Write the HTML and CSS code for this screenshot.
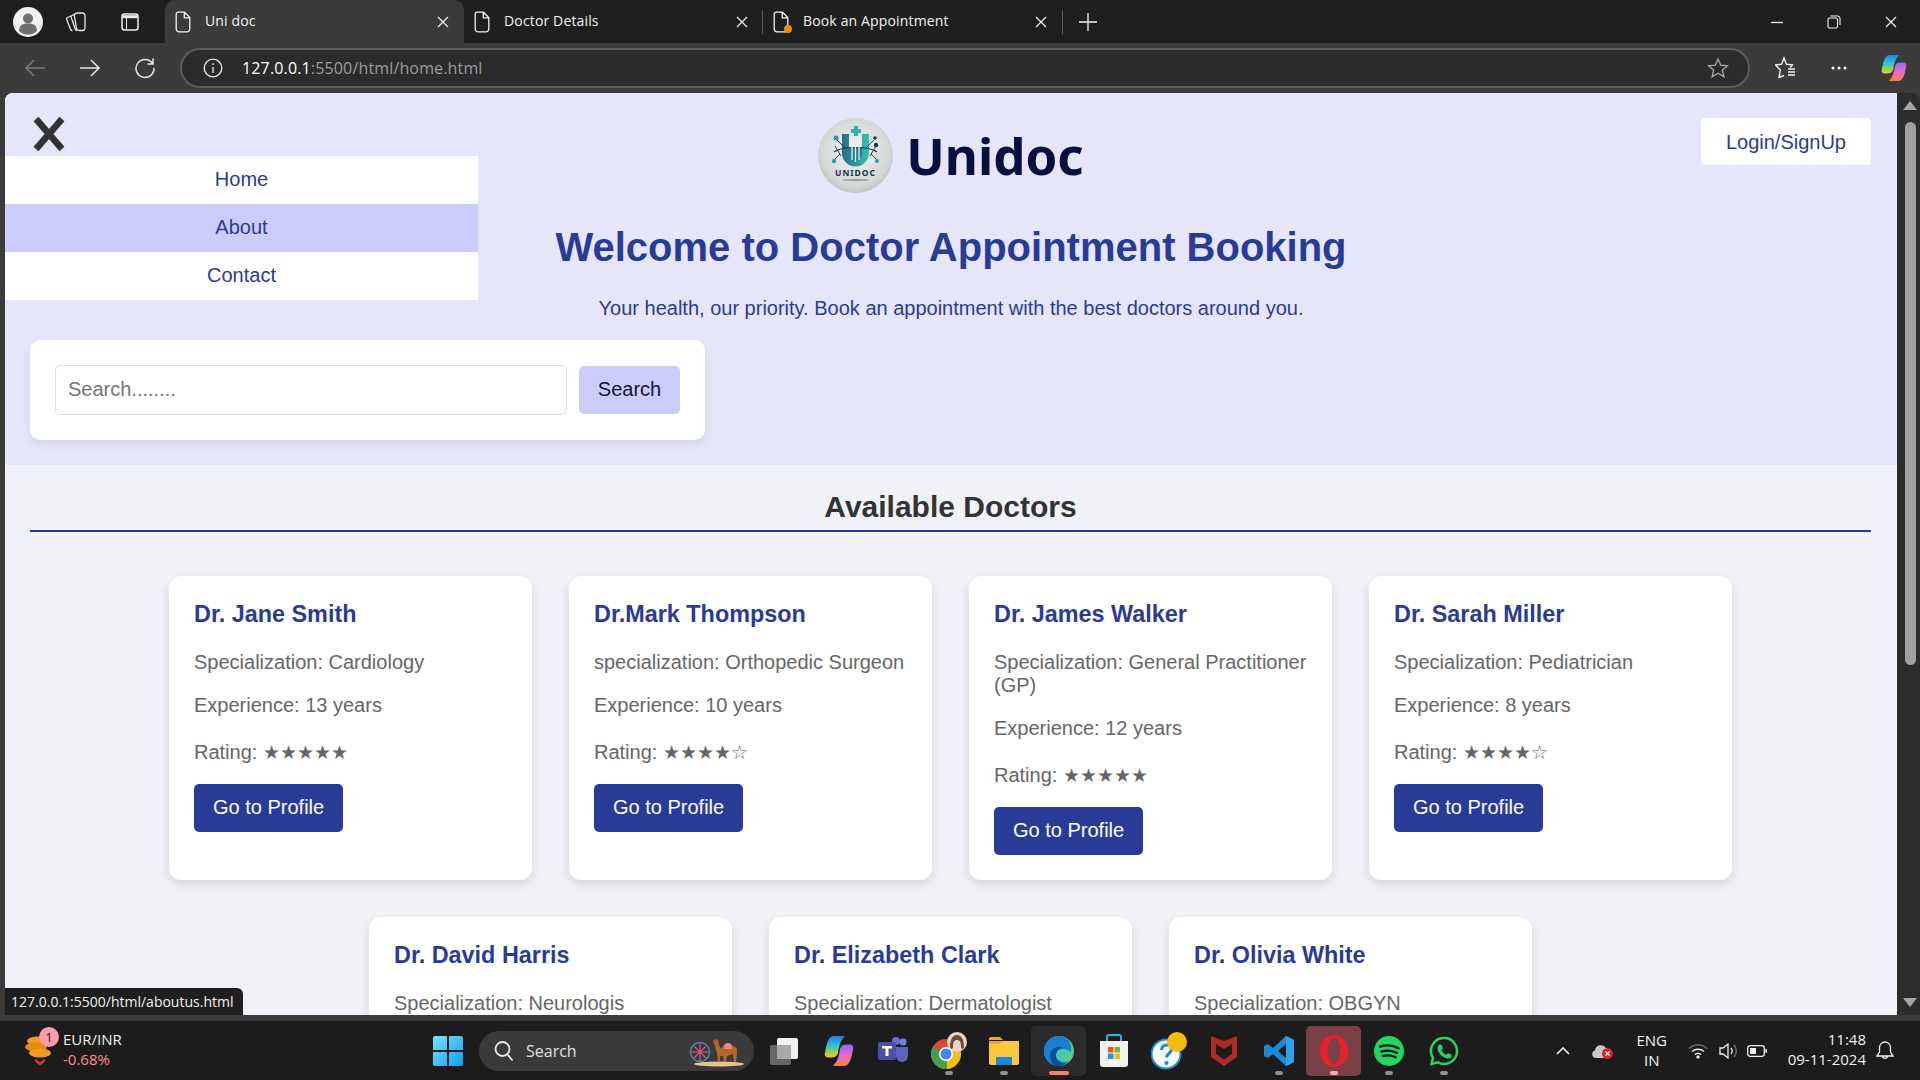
FILE: index.html
```html
<!DOCTYPE html>
<html lang="en">
<head>
<meta charset="utf-8">
<title>Uni doc</title>
<link rel="stylesheet" href="styles.css">
</head>
<body>
<svg class="defs" width="0" height="0" aria-hidden="true">
  <symbol id="doc" viewBox="0 0 16 22"><path d="M3 1.200h6.500L14.800 6.500V18a2.800 2.800 0 0 1-2.800 2.800H4A2.800 2.800 0 0 1 1.200 18V3A1.800 1.800 0 0 1 3 1.200zM9.300 1.500V6.800H14.500" fill="none" stroke="#f2f2f2" stroke-width="1.300"/></symbol>
  <symbol id="x" viewBox="0 0 12 12"><path d="M1 1l10 10M11 1L1 11" fill="none" stroke="#f0f0f0" stroke-width="1.200"/></symbol>
  <linearGradient id="cp1" x1="0" y1="0" x2="0" y2="1"><stop offset="0" stop-color="#1d7fe8"/><stop offset=".45" stop-color="#2ec4d8"/><stop offset=".75" stop-color="#9ad24a"/><stop offset="1" stop-color="#f7c22c"/></linearGradient>
  <linearGradient id="cp2" x1="0" y1="0" x2="0" y2="1"><stop offset="0" stop-color="#8a6cf0"/><stop offset=".5" stop-color="#e86ad0"/><stop offset="1" stop-color="#f7803a"/></linearGradient>
  <symbol id="copilot" viewBox="0 0 28 30"><path d="M9 1h9c2 0 1 1 0 2-3 3-4 8-5 14-1 3-3 4-6 4H4c-3 0-4-2-3-5C2 10 4 1 9 1z" fill="url(#cp1)"/><path d="M19 29h-9c-2 0-1-1 0-2 3-3 4-8 5-14 1-3 3-4 6-4h3c3 0 4 2 3 5-1 6-3 15-8 15z" fill="url(#cp2)"/></symbol>
</svg>

<div class="tabbar">
  <div class="profile"><svg width="30" height="30" viewBox="0 0 30 30"><circle cx="15" cy="15" r="15" fill="#f1f1f1"/><circle cx="15" cy="11.500" r="5" fill="#6f6f6f"/><path d="M6 24c0-6 4-7.500 9-7.500s9 1.500 9 7.500a13 13 0 0 1-18 0z" fill="#6f6f6f"/></svg></div>
  <div class="tool-icon w-first"><svg width="24" height="22" viewBox="0 0 24 22" fill="none" stroke="#e8e8e8" stroke-width="1.300"><path d="M7 5l-3.500 1.500a1.500 1.500 0 0 0-.8 2l4 10a2 2 0 0 0 1.800 1.300"/><path d="M11 3L8 4.500a1.500 1.500 0 0 0-.8 2l4 11.500a2 2 0 0 0 1.800 1.500"/><path d="M13 2h5.500a2.500 2.500 0 0 1 2.500 2.500V17a2.500 2.500 0 0 1-2.500 2.500h-3a3 3 0 0 1-3-2L10.500 6c-.5-2 .5-4 2.500-4z"/></svg></div>
  <div class="tool-icon w-second"><svg width="20" height="20" viewBox="0 0 20 20" fill="none" stroke="#f0f0f0" stroke-width="1.500"><rect x="2" y="2" width="16" height="16" rx="2.500"/><path d="M2.500 4.700h15" stroke-width="3"/><path d="M6.500 6v12" stroke-width="1"/></svg></div>
  <div class="tab tab-active"><svg class="doc" width="16" height="22"><use href="#doc"/></svg><span class="tab-title">Uni doc</span><svg class="tab-x" width="12" height="12"><use href="#x"/></svg></div>
  <div class="tab"><svg class="doc" width="16" height="22"><use href="#doc"/></svg><span class="tab-title">Doctor Details</span><svg class="tab-x" width="12" height="12"><use href="#x"/></svg></div>
  <div class="tab tab-sep"><span class="doc-wrap"><svg class="doc" width="16" height="22"><use href="#doc"/></svg><i class="orange-dot"></i></span><span class="tab-title">Book an Appointment</span><svg class="tab-x" width="12" height="12"><use href="#x"/></svg></div>
  <div class="new-tab"><svg width="18" height="18" viewBox="0 0 18 18"><path d="M9 0v18M0 9h18" stroke="#f0f0f0" stroke-width="1.300"/></svg></div>
  <div class="win-controls">
    <svg width="12" height="12" viewBox="0 0 12 12"><path d="M0 6.500h12" stroke="#f0f0f0" stroke-width="1.300"/></svg>
    <svg width="14" height="14" viewBox="0 0 14 14" fill="none" stroke="#f0f0f0" stroke-width="1.100"><rect x="1" y="3" width="9.500" height="10" rx="1.500"/><path d="M3.500 1h7a2.500 2.500 0 0 1 2.500 2.500V10"/></svg>
    <svg width="12" height="12"><use href="#x"/></svg>
  </div>
</div>

<div class="toolbar">
  <svg class="nav-ic" width="22" height="22" viewBox="0 0 22 22" fill="none" stroke="#7a7a7a" stroke-width="1.500"><path d="M21 11H2M10 3l-8 8 8 8"/></svg>
  <svg class="nav-ic" width="22" height="22" viewBox="0 0 22 22" fill="none" stroke="#e8e8e8" stroke-width="1.500"><path d="M1 11h19M12 3l8 8-8 8"/></svg>
  <svg class="nav-ic" width="22" height="22" viewBox="0 0 22 22" fill="none" stroke="#e8e8e8" stroke-width="1.500"><path d="M18.500 6.500A9 9 0 1 0 20 11M19 1.500v5.500h-5.500"/></svg>
  <div class="address">
    <svg width="20" height="20" viewBox="0 0 20 20" fill="none" stroke="#eee" stroke-width="1.300"><circle cx="10" cy="10" r="8.800"/><path d="M10 9v6M10 5.200v1.800"/></svg>
    <span class="url"><b>127.0.0.1</b>:5500/html/home.html</span>
    <svg class="addr-star" width="22" height="22" viewBox="0 0 22 22"><path d="M11 2l2.700 6.200 6.700.6-5.100 4.400 1.600 6.600L11 16.300 5.100 19.800l1.600-6.600L1.600 8.800l6.700-.6z" fill="none" stroke="#a8a8a8" stroke-width="1.300"/></svg>
  </div>
  <div class="toolbar-right">
    <svg width="22" height="24" viewBox="0 0 22 24" fill="none" stroke="#f2f2f2" stroke-width="1.400"><path d="M9 19.500L4 21.500l1.300-7.500L.6 9l6-.8L9 2l2.400 6.200 6 .8-2.300 2.500"/><path d="M13 13h7M13 16h7M13 19h7"/></svg>
    <svg width="18" height="6" viewBox="0 0 18 6" fill="#f2f2f2"><circle cx="3" cy="3" r="1.500"/><circle cx="9" cy="3" r="1.500"/><circle cx="15" cy="3" r="1.500"/></svg>
    <svg width="26" height="28"><use href="#copilot"/></svg>
  </div>
</div>

<div class="browser-body">
  <main class="viewport">
    <header class="hero">
      <div class="hero-top">
        <div class="hero-left">
          <svg class="close-ic" width="32" height="36" viewBox="0 0 32 36"><path d="M3 3l26 30M29 3L3 33" stroke="#333" stroke-width="6.500"/></svg>
        </div>
        <div class="brand">
          <svg width="75" height="75" viewBox="0 0 75 75">
            <defs><radialGradient id="lg" cx=".5" cy=".45" r=".6"><stop offset="0" stop-color="#f2f4f3"/><stop offset=".75" stop-color="#d3d9d7"/><stop offset="1" stop-color="#b4bcb9"/></radialGradient><linearGradient id="lu" x1="0" y1="0" x2="1" y2="0"><stop offset="0" stop-color="#2a6a8a"/><stop offset="1" stop-color="#35c3ae"/></linearGradient></defs>
            <circle cx="37.500" cy="37.500" r="37.500" fill="url(#lg)"/>
            <path d="M24 16v19a13.500 13.500 0 0 0 27 0V16h-7v19a6.500 6.500 0 0 1-13 0V16z" fill="url(#lu)"/>
            <path d="M31 30h13v6a6.500 6.500 0 0 1-13 0z" fill="#2b7a94"/>
            <path d="M33 11h3V8h4v3h3v4h-3v3h-4v-3h-3z" fill="#2fb5a6"/>
            <path d="M16 34c8-6 35-6 43 0" fill="none" stroke="#17334f" stroke-width="1.200"/>
            <path d="M19 22l8 8M17 28l6 10M56 22l-8 8M58 28l-6 10M16 42l6-6M59 42l-6-6" stroke="#1d4a63" stroke-width="1"/>
            <g fill="#2a9d9a"><circle cx="18" cy="20" r="2.500"/><circle cx="16" cy="43" r="2.200"/><circle cx="59" cy="43" r="2"/></g>
            <g fill="#17334f"><circle cx="58" cy="27" r="2.200"/><circle cx="57" cy="20" r="1.800"/></g>
            <path d="M34 28v14M37.500 28v16M41 28v14" stroke="#e8f2f2" stroke-width="1.300"/>
            <text class="logo-word" x="37.500" y="57.500" text-anchor="middle">UNIDOC</text>
            <ellipse cx="37.500" cy="62" rx="14" ry="1.200" fill="#9aa3a3"/>
          </svg>
          <span class="brand-name">Unidoc</span>
        </div>
        <div class="hero-right"><a class="login">Login/SignUp</a></div>
      </div>
      <nav class="side-menu">
        <a class="menu-item">Home</a>
        <a class="menu-item menu-hover">About</a>
        <a class="menu-item">Contact</a>
      </nav>
      <h1 class="title">Welcome to Doctor Appointment Booking</h1>
      <p class="tagline">Your health, our priority. Book an appointment with the best doctors around you.</p>
      <div class="search-card">
        <input class="search-input" type="text" placeholder="Search........">
        <button class="search-btn">Search</button>
      </div>
    </header>

    <section class="doctors">
      <h2 class="doctors-title">Available Doctors</h2>
      <div class="cards">
        <article class="card"><h3>Dr. Jane Smith</h3><p>Specialization: Cardiology</p><p>Experience: 13 years</p><p class="rating">Rating: <span class="stars">★★★★★</span></p><a class="profile-btn">Go to Profile</a></article>
        <article class="card"><h3>Dr.Mark Thompson</h3><p>specialization: Orthopedic Surgeon</p><p>Experience: 10 years</p><p class="rating">Rating: <span class="stars">★★★★☆</span></p><a class="profile-btn">Go to Profile</a></article>
        <article class="card"><h3>Dr. James Walker</h3><p>Specialization: General Practitioner (GP)</p><p>Experience: 12 years</p><p class="rating">Rating: <span class="stars">★★★★★</span></p><a class="profile-btn">Go to Profile</a></article>
        <article class="card"><h3>Dr. Sarah Miller</h3><p>Specialization: Pediatrician</p><p>Experience: 8 years</p><p class="rating">Rating: <span class="stars">★★★★☆</span></p><a class="profile-btn">Go to Profile</a></article>
        <article class="card"><h3>Dr. David Harris</h3><p>Specialization: Neurologis</p></article>
        <article class="card"><h3>Dr. Elizabeth Clark</h3><p>Specialization: Dermatologist</p></article>
        <article class="card"><h3>Dr. Olivia White</h3><p>Specialization: OBGYN</p></article>
      </div>
    </section>
    <div class="status-tip">127.0.0.1:5500/html/aboutus.html</div>
  </main>
  <aside class="scrollbar">
    <i class="arrow-up"></i>
    <i class="thumb"></i>
    <i class="arrow-down"></i>
  </aside>
</div>

<footer class="taskbar">
  <div class="widget">
    <span class="coins">
      <svg width="28" height="34" viewBox="0 0 28 34"><g fill="#f39a1d"><ellipse cx="13" cy="8" rx="11" ry="4.500"/><ellipse cx="11" cy="14" rx="11" ry="4.500" fill="#e58a12"/><ellipse cx="15" cy="20" rx="11" ry="4.500"/></g><path d="M10 27l5 4 5-4" fill="none" stroke="#c8421a" stroke-width="2.500"/></svg>
      <b class="badge">1</b>
    </span>
    <div class="widget-text"><span>EUR/INR</span><span class="neg">-0.68%</span></div>
  </div>
  <div class="start"><svg width="30" height="30" viewBox="0 0 30 30"><defs><linearGradient id="w1" x1="0" y1="0" x2="1" y2="1"><stop offset="0" stop-color="#7ae3fb"/><stop offset="1" stop-color="#0f9cf0"/></linearGradient></defs><path d="M0 2a2 2 0 0 1 2-2h12v14H0zM16 0h12a2 2 0 0 1 2 2v12H16zM0 16h14v14H2a2 2 0 0 1-2-2zM16 16h14v12a2 2 0 0 1-2 2H16z" fill="url(#w1)"/></svg></div>
  <div class="task-search">
    <svg width="20" height="22" viewBox="0 0 20 22" fill="none" stroke="#e6e6e6" stroke-width="1.800"><circle cx="8.500" cy="9" r="7"/><path d="M13.500 14.500l5 6"/></svg>
    <span>Search</span>
    <svg class="camel" width="56" height="32" viewBox="0 0 56 32"><ellipse cx="30" cy="29" rx="25" ry="2.500" fill="#e8c48a"/><circle cx="11" cy="17" r="9.500" fill="none" stroke="#4f7fb5" stroke-width="1.500"/><path d="M11 8v18M2 17h18M5 11l12 12M17 11L5 23" stroke="#d9537a" stroke-width="1.200"/><path d="M24 6l3-2 2 1 1 5 2 4c2-3 3-6 7-6s4 3 7 4 2 4 2 6l-1 9h-2l-1-8-6 2-1 6h-2l-1-6-3 0v6h-2l-1-9-2-7z" fill="#b5652a"/><path d="M36 9c2-1 4-1 6 0l1 5h-8z" fill="#e88a8a"/></svg>
  </div>
  <div class="task-icons">
    <span class="t-item"><svg width="30" height="30" viewBox="0 0 30 30"><rect x="8" y="2" width="21" height="21" rx="2" fill="#f1f1f1"/><rect x="1" y="9" width="21" height="20" rx="2" fill="#6f6f6f" opacity=".9"/><rect x="8" y="9" width="14" height="14" fill="#a8a8a8"/></svg></span>
    <span class="t-item"><svg width="30" height="32"><use href="#copilot"/></svg></span>
    <span class="t-item"><svg width="32" height="28" viewBox="0 0 32 28"><circle cx="25" cy="5" r="3.500" fill="#7b83d6"/><circle cx="18" cy="4" r="4" fill="#6a71c9"/><path d="M15 10h15v9a6 6 0 0 1-12 0z" fill="#5e64b8"/><rect x="0" y="5" width="18" height="18" rx="2" fill="#4a50a8"/><path d="M4 9h10v2.500h-3.500V19h-3v-7.500H4z" fill="#fff"/></svg></span>
    <span class="t-item"><svg width="36" height="38" viewBox="0 0 36 38"><circle cx="15" cy="22" r="15" fill="#db4437"/><path d="M15 22L28 14.500A15 15 0 0 1 16 37z" fill="#f4c20d"/><path d="M15 22L16 37A15 15 0 0 1 2 14.500z" fill="#4a9d4a"/><circle cx="15" cy="22" r="7" fill="#fff"/><circle cx="15" cy="22" r="5.500" fill="#4285f4"/><circle cx="26" cy="10" r="10" fill="#e8d5c8"/><path d="M19 15c0-8 3-12 7-12s7 4 7 12c-1 3-3 2-3 0 0-5-1-7-4-7s-4 2-4 7c0 2-2 3-3 0z" fill="#6b4a38"/></svg><i class="pin"></i></span>
    <span class="t-item"><svg width="30" height="28" viewBox="0 0 30 28"><path d="M0 2a2 2 0 0 1 2-2h9l3 3h-14z" fill="#e8a92c"/><path d="M0 4h30v22a2 2 0 0 1-2 2H2a2 2 0 0 1-2-2z" fill="#fcc83c"/><path d="M0 4h14l-3 3H0z" fill="#e8a92c"/><path d="M8 20h14a1 1 0 0 1 1 1v7H7v-7a1 1 0 0 1 1-1z" fill="#1e88d8"/></svg><i class="pin"></i></span>
    <span class="t-item t-active"><svg width="30" height="30" viewBox="0 0 30 30"><defs><linearGradient id="ed" x1="0" y1="0" x2="1" y2="1"><stop offset="0" stop-color="#2db6e8"/><stop offset="1" stop-color="#5ed37a"/></linearGradient></defs><circle cx="15" cy="15" r="15" fill="url(#ed)"/><path d="M15 0C7 0 0 7 0 15c0 9 7 15 15 15 4 0 8-2 10-5-5 2-12 0-13-5-1-4 3-7 7-7 3 0 6 1 8 3 1-5-1-16-12-16z" fill="#1b7fd0"/><path d="M6 19c0-5 4-8 9-8 3 0 4 1 4 1-4 0-7 3-7 8 0 4 4 8 10 7-2 2-5 3-8 3-5 0-8-5-8-11z" fill="#0d4f96"/></svg><i class="pin pin-wide"></i></span>
    <span class="t-item"><svg width="30" height="34" viewBox="0 0 30 34"><path d="M8 8V3a2 2 0 0 1 2-2h10a2 2 0 0 1 2 2v5" fill="none" stroke="#26b4e8" stroke-width="2"/><path d="M1 7h28v23a3 3 0 0 1-3 3H4a3 3 0 0 1-3-3z" fill="#f2f2f2"/><rect x="9" y="13" width="5.500" height="5.500" fill="#e8562a"/><rect x="15.500" y="13" width="5.500" height="5.500" fill="#7ab929"/><rect x="9" y="19.500" width="5.500" height="5.500" fill="#1e9be8"/><rect x="15.500" y="19.500" width="5.500" height="5.500" fill="#f7b81c"/></svg></span>
    <span class="t-item"><svg width="36" height="38" viewBox="0 0 36 38"><circle cx="15" cy="22" r="14.500" fill="#f4f9fb" stroke="#1e88c8" stroke-width="2"/><path d="M10.500 18c0-3 2-5 5-5s5 2 5 4.500c0 4-5 4-5 8" fill="none" stroke="#1e88c8" stroke-width="3"/><circle cx="15.500" cy="31" r="2" fill="#1e88c8"/><circle cx="26" cy="10" r="10" fill="#f5bb0c"/></svg></span>
    <span class="t-item"><svg width="26" height="30" viewBox="0 0 26 30"><path d="M0 0l13 5 13-5v21l-13 9-13-9zM5 8v10l8 5.500 8-5.500V8l-8 5z" fill="#b02a28" fill-rule="evenodd"/></svg></span>
    <span class="t-item"><svg width="30" height="30" viewBox="0 0 30 30"><path d="M22 0l8 4v22l-8 4-13-12-5 4-4-2V10l4-2 5 4zM22 8l-8 7 8 7z" fill="#1e88d8"/><path d="M22 0l8 4v22l-8 4z" fill="#2ba3e8"/></svg><i class="pin"></i></span>
    <span class="t-item t-opera"><svg width="28" height="32" viewBox="0 0 28 32"><ellipse cx="14" cy="16" rx="14" ry="16" fill="#e8202a"/><ellipse cx="14" cy="16" rx="6.500" ry="13" fill="#7a4045"/></svg><i class="pin pin-pink"></i></span>
    <span class="t-item"><svg width="30" height="30" viewBox="0 0 30 30"><circle cx="15" cy="15" r="15" fill="#1ed760"/><path d="M6 10.500c6-1.800 13-1.300 18.500 1.800M7.500 15.500c5-1.400 11-1 15.500 1.500M9 20c4-1 9-.8 12.500 1.300" fill="none" stroke="#111" stroke-width="2.400" stroke-linecap="round"/></svg><i class="pin"></i></span>
    <span class="t-item"><svg width="30" height="30" viewBox="0 0 30 30"><path d="M15 2a13 13 0 0 0-11 20L2.500 28l6.300-1.600A13 13 0 1 0 15 2z" fill="none" stroke="#25d366" stroke-width="2.500"/><path d="M10.500 8.500l2 .2 1.500 3.500-1.500 2c1 2 2.500 3.500 4.500 4.500l2-1.500 3.500 1.500v2c-1 1.500-3 2-5 1.500-4-1-8-5-9-9-.3-2 .5-3.700 2-4.700z" fill="#25d366"/></svg><i class="pin"></i></span>
  </div>
  <div class="tray">
    <svg class="tray-chev" width="14" height="8" viewBox="0 0 14 8"><path d="M1 7l6-6 6 6" fill="none" stroke="#f0f0f0" stroke-width="1.600"/></svg>
    <span class="cloud"><svg width="22" height="16" viewBox="0 0 22 16"><path d="M4 15a4 4 0 0 1-1-7.800A6 6 0 0 1 14 5a4.500 4.500 0 0 1 4 5l-4 5z" fill="#c9c9c9"/><circle cx="15.500" cy="10.500" r="5.500" fill="#d8232a"/><path d="M13.500 8.500l4 4M17.500 8.500l-4 4" stroke="#fff" stroke-width="1.200"/></svg></span>
    <div class="lang"><span>ENG</span><span>IN</span></div>
    <svg class="wifi" width="20" height="16" viewBox="0 0 20 16" fill="none" stroke="#f0f0f0" stroke-width="1.400"><path d="M1 5.500a13 13 0 0 1 18 0" stroke="#777"/><path d="M4 8.500a9 9 0 0 1 12 0M6.800 11.500a5 5 0 0 1 6.400 0"/><circle cx="10" cy="14" r="1" fill="#f0f0f0"/></svg>
    <svg class="vol" width="20" height="18" viewBox="0 0 20 18" fill="none" stroke="#f0f0f0" stroke-width="1.300"><path d="M1 6v6h3l5 4V2L4 6z"/><path d="M12 6a5 5 0 0 1 0 6"/><path d="M15 3a9 9 0 0 1 0 12" stroke="#777"/></svg>
    <svg class="batt" width="20" height="12" viewBox="0 0 20 12"><rect x=".7" y=".7" width="16.600" height="10.600" rx="2.500" fill="none" stroke="#f0f0f0" stroke-width="1.300"/><rect x="3" y="3" width="6" height="6" fill="#f0f0f0"/><rect x="18.300" y="4" width="1.700" height="4" rx=".8" fill="#f0f0f0"/></svg>
    <div class="clock"><span>11:48</span><span>09-11-2024</span></div>
    <svg class="bell" width="18" height="20" viewBox="0 0 18 20" fill="none" stroke="#f0f0f0" stroke-width="1.300"><path d="M9 1a5.500 5.500 0 0 1 5.500 5.500V11l2.500 4H1l2.500-4V6.500A5.500 5.500 0 0 1 9 1zM6.500 15.500a2.600 2.600 0 0 0 5 0"/></svg>
  </div>
</footer>
</body>
</html>
```
FILE: styles.css
```css
* { box-sizing: border-box; }
html, body { margin: 0; height: 100%; }
body {
  width: 1920px; height: 1080px; overflow: hidden;
  display: flex; flex-direction: column;
  background: #3b3b3b;
  font-family: "Liberation Sans", Arial, sans-serif;
}
.defs { position: absolute; }

/* browser tab strip */
.tabbar {
  height: 43px; flex: none; display: flex; align-items: center;
  background: #1f1f1f; color: #f2f2f2;
  font-family: "Open Sans", "Noto Sans", sans-serif; font-size: 14px;
}
.profile { width: 30px; height: 30px; margin-left: 13px; flex: none; }
.profile svg { display: block; }
.tool-icon { flex: none; display: flex; }
.w-first { margin-left: 21px; }
.w-second { margin-left: 32px; margin-right: 25px; }
.tab {
  width: 299px; height: 43px; flex: none; padding: 0 15px 0 10px;
  display: flex; align-items: center; position: relative;
}
.tab-active { background: #3b3b3b; border-radius: 10px 10px 0 0; }
.tab-title { margin-left: 14px; flex: 1; letter-spacing: 0.15px; padding-bottom: 2px; }
.tab .doc { flex: none; }
.tab-sep::before, .tab-sep::after {
  content: ""; position: absolute; top: 10px; height: 24px; width: 1px; background: #5a5a5a;
}
.tab-sep::before { left: -1px; }
.tab-sep::after { right: -1px; }
.tab-x { flex: none; }
.doc-wrap { position: relative; display: flex; }
.orange-dot {
  position: absolute; right: -3px; bottom: 0; width: 8px; height: 8px;
  border-radius: 50%; background: #f58a0b;
}
.new-tab { margin-left: 17px; display: flex; flex: none; }
.win-controls {
  margin-left: auto; margin-right: 23px; display: flex; align-items: center; gap: 44px;
}

/* address row */
.toolbar {
  height: 50px; flex: none; display: flex; align-items: center;
  background: #3b3b3b; padding-left: 24px;
}
.nav-ic { flex: none; margin-right: 33px; }
.nav-ic:nth-child(3) { margin-right: 24px; }
.address {
  width: 1570px; height: 40px; flex: none; display: flex; align-items: center;
  padding: 0 19px 0 21px;
  background: #2b2b2b; border: 2px solid #5c5c5c; border-radius: 20px;
}
.url {
  margin-left: 19px; flex: 1;
  font-family: "Open Sans", "Noto Sans", sans-serif; font-size: 16px; color: #9c9c9c;
  letter-spacing: 0.15px;
}
.url b { font-weight: 400; color: #fff; }
.toolbar-right { display: flex; align-items: center; margin-left: 25px; gap: 33px; }

/* page area */
.browser-body { flex: 1; display: flex; min-height: 0; padding-left: 5px; height: 922px; }
.viewport {
  width: 1892px; height: 922px; flex: none; overflow: hidden; position: relative;
  background: #f0f2f7; border-radius: 8px 0 0 0;
}
.hero { height: 372px; background: #e6e6fa; padding-top: 25px; position: relative; }
.hero-top { display: grid; grid-template-columns: 1fr auto 1fr; height: 75px; }
.hero-left { position: relative; }
.close-ic { position: absolute; left: 28px; top: -2px; }
.brand { display: flex; align-items: center; gap: 13px; }
.brand-name {
  font-family: "Noto Sans", "Open Sans", sans-serif; font-weight: 700; font-size: 51px;
  color: #050f40; padding-bottom: 2px;
}
.logo-word { font-family: "Noto Sans", sans-serif; font-weight: 700; font-size: 8.500px; letter-spacing: 1px; fill: #17334f; }
.hero-right { display: flex; justify-content: flex-end; align-items: flex-start; padding-right: 26px; }
.login {
  display: block; height: 47px; padding: 13px 25px 11px; line-height: 23px;
  background: #fff; color: #2a3b97; font-size: 20px; border-radius: 4px;
}
.side-menu {
  position: absolute; left: 0; top: 63px; width: 473px; background: #fff;
  display: flex; flex-direction: column;
}
.menu-item { height: 48px; line-height: 47px; text-align: center; font-size: 20px; color: #2a3b97; }
.menu-hover { background: #ccccfa; }
.title {
  margin: 31px 0 0; text-align: center; font-size: 40px; line-height: 46px;
  font-weight: 700; color: #2a3b97;
}
.tagline {
  margin: 27px 0 0; text-align: center; font-size: 20px; line-height: 23px; color: #2a3b97;
}
.search-card {
  width: 675px; height: 100px; margin: 20px 0 0 25px; padding: 0 25px;
  display: flex; align-items: center; gap: 12px;
  background: #fff; border-radius: 10px; box-shadow: 0 4px 10px rgba(0, 0, 0, .08);
}
.search-input {
  width: 512px; height: 50px; padding: 0 12px 2px; font: 20px "Liberation Sans", Arial, sans-serif;
  border: 1px solid #ddd; border-radius: 5px; background: #fff; color: #333;
}
.search-input::placeholder { color: #757575; opacity: 1; }
.search-btn {
  width: 101px; height: 48px; padding: 0 0 2px; border: 0; border-radius: 5px; background: #ccccfa;
  font: 20px "Liberation Sans", Arial, sans-serif; color: #10163f;
}

/* doctors */
.doctors { padding: 25px 26px 0 25px; }
.doctors-title {
  margin: 0; padding-bottom: 6px; text-align: center; font-size: 30px; line-height: 34px;
  font-weight: 700; color: #333; border-bottom: 2px solid #2a3b97;
}
.cards { margin-top: 44px; display: flex; flex-wrap: wrap; justify-content: center; gap: 37px; }
.card {
  width: 363px; padding: 25px; background: #fff; border-radius: 12px;
  box-shadow: 0 4px 10px rgba(0, 0, 0, .12);
}
.card h3 { margin: 0 0 24px; font-size: 23.4px; line-height: 26px; font-weight: 700; color: #2a3b97; }
.card p { margin: 20px 0; font-size: 20px; line-height: 23px; color: #666; }
.card .rating { margin: 21px 0 18px; line-height: 28px; }
.stars { font-family: "DejaVu Sans", sans-serif; font-size: 19px; }
.profile-btn {
  display: block; width: fit-content; height: 48px; padding: 12px 19px 12px; line-height: 23px;
  background: #2a3b97; color: #fff; font-size: 20px; border-radius: 5px;
}
.status-tip {
  position: absolute; left: 0; bottom: 0; width: 238px; height: 27px; padding: 0 6px;
  line-height: 27px; background: #1f1f1f; color: #f2f2f2; border-radius: 0 6px 0 0;
  font-family: "Open Sans", "Noto Sans", sans-serif; font-size: 14px; white-space: nowrap;
}

/* scrollbar */
.scrollbar {
  width: 23px; flex: none; height: 922px; background: #2c2c2c; padding: 8px 0 8px 3px;
  display: flex; flex-direction: column; align-items: center; border-radius: 0 8px 0 0;
}
.scrollbar i { display: block; }
.arrow-up, .arrow-down { width: 0; height: 0; border-left: 7px solid transparent; border-right: 7px solid transparent; }
.arrow-up { border-bottom: 9px solid #a6a6a6; }
.arrow-down { border-top: 9px solid #a6a6a6; margin-top: auto; }
.thumb { width: 11px; height: 543px; margin-top: 12px; background: #a0a0a0; border-radius: 6px; }

/* windows taskbar */
.taskbar {
  height: 59px; flex: none; margin-top: 5px; display: flex; align-items: center; position: relative;
  background: #1c1c1c; color: #f2f2f2;
  font-family: "Open Sans", "Noto Sans", sans-serif; font-size: 15px;
}
.widget { width: 433px; flex: none; display: flex; align-items: center; padding-left: 25px; }
.coins { position: relative; width: 38px; height: 36px; display: block; }
.badge {
  position: absolute; left: 14px; top: -6px; width: 20px; height: 20px; border-radius: 50%;
  background: #ff9aa8; color: #222; font-weight: 400; font-size: 13px; line-height: 20px; text-align: center;
}
.widget-text { display: flex; flex-direction: column; line-height: 20px; padding-bottom: 4px; }
.neg { color: #ff8d8d; }
.start { width: 30px; flex: none; display: flex; }
.task-search {
  width: 275px; height: 40px; flex: none; margin-left: 16px; padding: 0 9px 0 15px;
  display: flex; align-items: center; gap: 12px;
  background: #3a3a3a; border-radius: 20px; font-size: 16px; color: #e0e0e0;
}
.camel { margin-left: auto; }
.task-icons { display: flex; align-items: center; margin-left: 2px; height: 50px; }
.t-item {
  width: 55px; height: 50px; flex: none; position: relative;
  display: flex; align-items: center; justify-content: center; border-radius: 5px;
}
.t-active { background: #2b2b2b; }
.t-opera { background: #7a4045; }
.pin {
  position: absolute; left: 50%; bottom: 1px; width: 8px; height: 4px; margin-left: -4px;
  border-radius: 2px; background: #8f8f8f;
}
.pin-wide { width: 20px; margin-left: -10px; background: #f0816a; }
.pin-pink { background: #ffa6b0; }
.tray { position: absolute; right: 0; top: 0; bottom: 0; display: flex; align-items: center; padding-right: 26px; }
.tray-chev { margin-right: 22px; }
.cloud { display: flex; margin-right: 18px; }
.lang { width: 40px; display: flex; flex-direction: column; align-items: center; line-height: 20px; margin-right: 16px; padding-bottom: 2px; }
.wifi { margin-right: 11px; }
.vol { margin-right: 8px; }
.batt { margin-right: 21px; }
.clock { display: flex; flex-direction: column; align-items: flex-end; line-height: 20px; margin-right: 10px; padding-bottom: 3px; }
```
